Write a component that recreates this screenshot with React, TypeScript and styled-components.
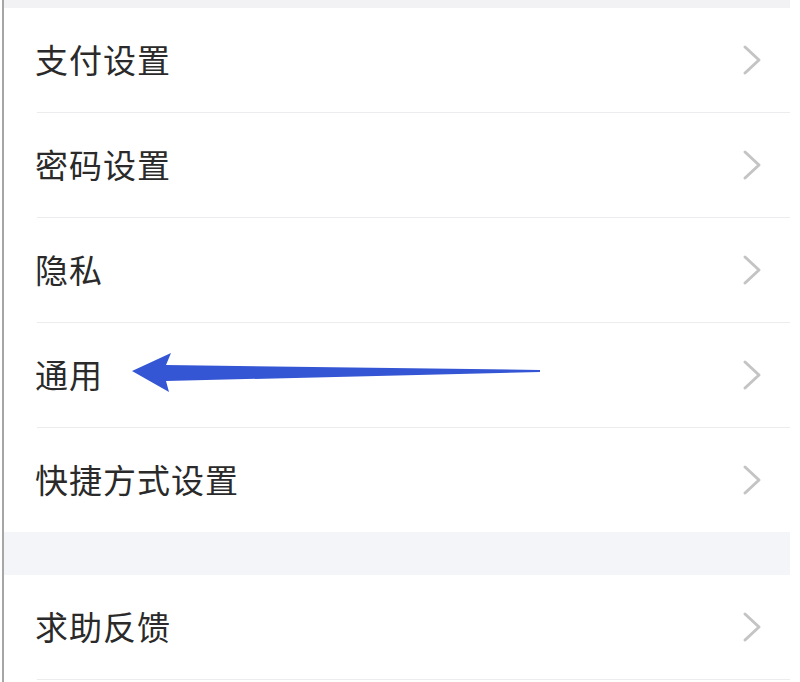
import React from "react";
import styled, { createGlobalStyle } from "styled-components";

const GlobalStyle = createGlobalStyle`
  html, body {
    margin: 0;
    padding: 0;
    background: #ffffff;
  }
`;

const items = ["支付设置", "密码设置", "隐私", "通用", "快捷方式设置"];

function Chevron() {
  return (
    <svg width="20" height="32" viewBox="0 0 20 32">
      <polyline
        points="3,3 17,16 3,29"
        fill="none"
        stroke="#c4c4c4"
        strokeWidth="3"
        strokeLinecap="round"
        strokeLinejoin="round"
      />
    </svg>
  );
}

function Arrow() {
  return (
    <ArrowWrap width="420" height="44" viewBox="0 0 420 44">
      {/* tip at left, tapering tail to the right */}
      <polygon
        points="0,18 39,0 34,12 408,17 408,19 34,28 37,39"
        fill="#3556d4"
      />
    </ArrowWrap>
  );
}

function App() {
  return (
    <Page>
      <GlobalStyle />
      <Panel>
        <TopStrip />
        <Group>
          {items.map((label, i) => (
            <Row key={label} last={i === items.length - 1}>
              <Label>{label}</Label>
              <Chevron />
              {label === "通用" && <Arrow />}
            </Row>
          ))}
        </Group>
        <Gap />
        <Group>
          <Row last={false}>
            <Label>求助反馈</Label>
            <Chevron />
          </Row>
        </Group>
      </Panel>
    </Page>
  );
}

const Page = styled.div`
  width: 800px;
  height: 682px;
  overflow: hidden;
  background: #ffffff;
  padding-left: 2px;
  box-sizing: border-box;
`;

const Panel = styled.div`
  width: 786px;
  min-height: 682px;
  border-left: 2px solid #a6a6a6;
  background: #ffffff;
  display: flex;
  flex-direction: column;
`;

const TopStrip = styled.div`
  height: 8px;
  background: #f2f2f4;
`;

const Group = styled.div`
  display: flex;
  flex-direction: column;
  padding-left: 33px;
`;

const Row = styled.div<{ last: boolean }>`
  position: relative;
  height: 104px;
  display: flex;
  align-items: center;
  justify-content: space-between;
  padding-right: 28px;
  border-bottom: ${(p) => (p.last ? "none" : "1px solid #ececee")};
`;

const Label = styled.div`
  font-family: "Noto Sans CJK SC", "Noto Sans", sans-serif;
  font-size: 33px;
  color: #2a2a2a;
  letter-spacing: 1px;
  margin-left: -2px;
  margin-top: -2px;
`;

const Gap = styled.div`
  height: 43px;
  background: #f4f5f8;
`;

const ArrowWrap = styled.svg`
  position: absolute;
  left: 95px;
  top: 30px;
`;

export default App;
